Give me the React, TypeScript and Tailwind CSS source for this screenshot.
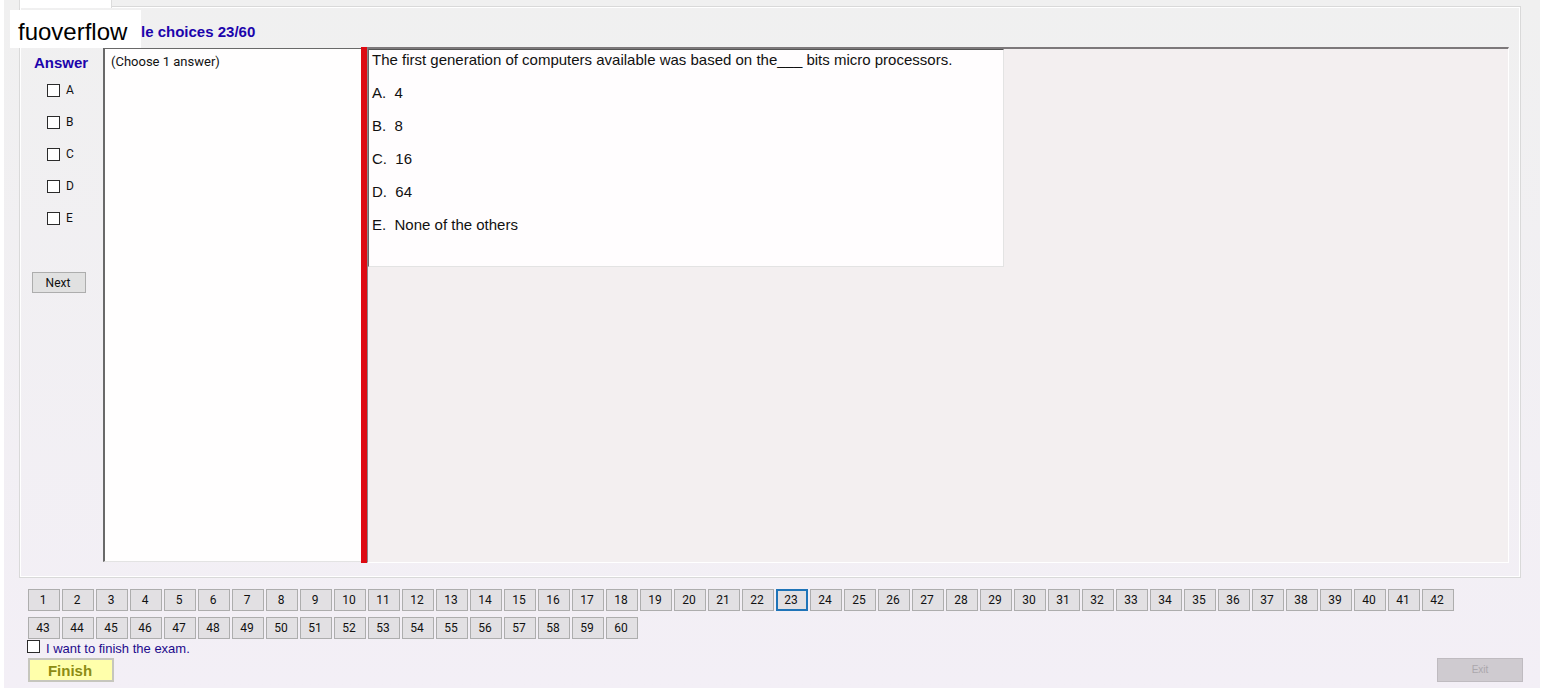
import { useState } from 'react';
import clsx from 'clsx';

const TOTAL = 60;
const answers = ['A', 'B', 'C', 'D', 'E'];
const options = ['4', '8', '16', '64', 'None of the others'];

const checkbox =
  'size-[13px] shrink-0 appearance-none border border-[#2b2b2b] bg-white checked:bg-[#2b2b2b] checked:shadow-[inset_0_0_0_2px_white]';

function AnswerColumn({ onNext }: { onNext: () => void }) {
  const [picked, setPicked] = useState<string[]>([]);

  const toggle = (letter: string) => {
    setPicked((prev) =>
      prev.includes(letter) ? prev.filter((p) => p !== letter) : [...prev, letter]
    );
  };

  return (
    <div className="flex w-[83px] shrink-0 flex-col pt-1.5">
      <h2 className="pl-3.5 text-[15px] leading-5 font-bold text-[#1c04ac]">Answer</h2>
      <div className="mt-1 flex flex-col pl-[27px] font-[Roboto,sans-serif]">
        {answers.map((letter) => (
          <label key={letter} className="flex h-8 items-start gap-1.5 pt-[7px] text-xs leading-3">
            <input
              type="checkbox"
              className={checkbox}
              checked={picked.includes(letter)}
              onChange={() => toggle(letter)}
            />
            {letter}
          </label>
        ))}
      </div>
      <button
        onClick={onNext}
        className="mt-[35px] ml-3 h-[21px] w-[54px] border border-[#adadad] bg-[#e1e1e1] pr-0.5 font-[Roboto,sans-serif] text-xs leading-3"
      >
        Next
      </button>
    </div>
  );
}

function QuestionPane() {
  return (
    <div className="min-w-0 flex-1 border-t-2 border-r border-b border-l border-t-[#7c787a] border-r-white border-b-white border-l-[#8a8688] bg-[#f3eff0]">
      <div className="h-[218px] w-[636px] max-w-full border border-t-[#555] border-r-[#e3e3e3] border-b-[#e3e3e3] border-l-[#696969] bg-[#fffdfe] pt-px pl-[3px] text-[15px] leading-[17px]">
        <p>The first generation of computers available was based on the___ bits micro processors.</p>
        <ol>
          {options.map((text, i) => (
            <li key={text} className="mt-4 whitespace-pre">
              {`${answers[i]}.  ${text}`}
            </li>
          ))}
        </ol>
      </div>
    </div>
  );
}

export default function App() {
  const [current, setCurrent] = useState(23);
  const [wantFinish, setWantFinish] = useState(false);

  return (
    <div className="relative flex min-h-screen flex-col border-r-2 border-b-2 border-l-4 border-white bg-linear-to-b from-[#f0f0f0] to-[#f3eff6] font-['Liberation_Sans',Arial,sans-serif] text-[#111]">
      {/* Tab strip */}
      <div className="flex h-[6px] pl-[15px]">
        <div className="z-10 h-2 w-[93px] border-x border-[#dcdcdc] bg-white" />
      </div>

      {/* Exam panel */}
      <main className="mr-[19px] ml-[15px] flex flex-1 flex-col border border-[#d9d9d9] pr-[11px] pb-3.5 shadow-[inset_0_0_0_1px_white]">
        <h1 className="h-10 pt-[15px] pl-[121px] text-[15px] leading-5 font-bold text-[#1c04ac]">
          le choices {current}/{TOTAL}
        </h1>
        <div className="flex flex-1">
          <AnswerColumn onNext={() => setCurrent((c) => Math.min(c + 1, TOTAL))} />
          <div className="mt-px mb-px w-[258px] shrink-0 border-t border-b border-l-2 border-t-[#696969] border-b-[#e3e3e3] border-l-[#696969] bg-[#fffefe] pt-[5px] pl-1.5 font-[Roboto,sans-serif] text-[13px] leading-4">
            (Choose 1 answer)
          </div>
          <div className="w-1.5 shrink-0 bg-[#dd0a12]" />
          <QuestionPane />
        </div>
      </main>

      {/* Question navigation */}
      <footer className="pt-[11px]">
        <nav className="flex flex-wrap gap-x-0.5 gap-y-1.5 pr-16 pl-6 font-[Roboto,sans-serif] text-xs leading-3">
          {Array.from({ length: TOTAL }, (_, i) => i + 1).map((n) => (
            <button
              key={n}
              onClick={() => setCurrent(n)}
              className={clsx(
                'h-[22px] w-8 bg-[#e2e0e3] pr-0.5',
                n === current ? 'border-2 border-[#1f74b8]' : 'border border-[#adadad]'
              )}
            >
              {n}
            </button>
          ))}
        </nav>
        <label className="mt-px flex w-fit items-start gap-1.5 pl-[23px] text-[13px] leading-[18px] text-[#1d0a8c]">
          <input
            type="checkbox"
            className={checkbox}
            checked={wantFinish}
            onChange={(e) => setWantFinish(e.target.checked)}
          />
          I want to finish the exam.
        </label>
        <div className="flex justify-between pr-[17px] pb-1.5 pl-6">
          <button className="h-6 w-[86px] border-2 border-[#c6c6bd] bg-[#ffffab] pt-0.5 pr-0.5 text-[15px] leading-4 font-bold text-[#8c8c14]">
            Finish
          </button>
          <button
            disabled
            className="h-6 w-[86px] border border-[#bfbbc0] bg-[#cfcbd0] text-[10px] leading-3 text-[#aba7ac]"
          >
            Exit
          </button>
        </div>
      </footer>

      {/* Site badge over the panel corner */}
      <div className="absolute top-2.5 left-1.5 h-[38px] w-[131px] bg-white pt-2 pl-2 text-2xl leading-7 text-black">
        fuoverflow
      </div>
    </div>
  );
}
